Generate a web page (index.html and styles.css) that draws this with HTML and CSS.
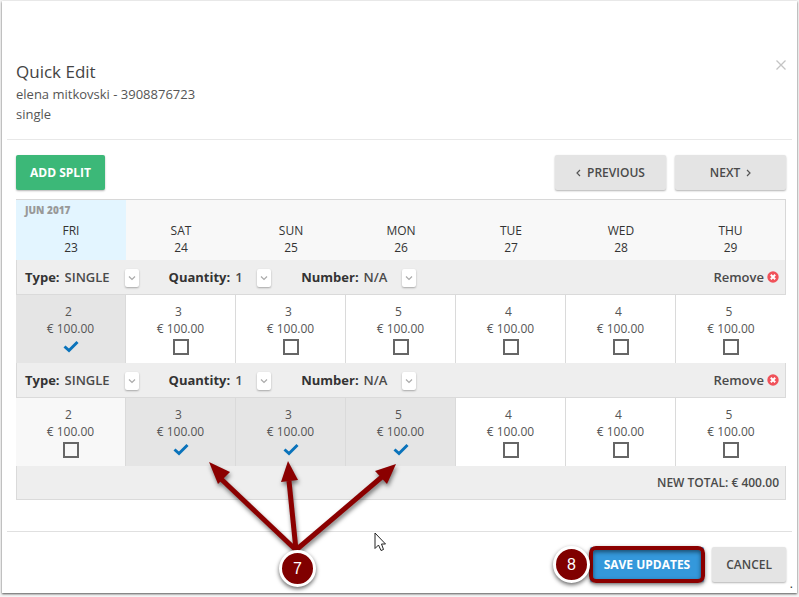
FILE: index.html
```html
<!DOCTYPE html>
<html lang="en">
<head>
  <meta charset="UTF-8">
  <meta name="viewport" content="width=device-width, initial-scale=1.0">
  <title>Quick Edit</title>
  <link rel="stylesheet" href="styles.css">
</head>
<body>
  <div class="dialog">
    <header class="dialog-header">
      <div>
        <h1 class="title">Quick Edit</h1>
        <p class="guest">elena mitkovski - 3908876723</p>
        <p class="guest">single</p>
      </div>
      <button type="button" class="close" aria-label="Close">
        <svg width="10" height="10" viewBox="0 0 10 10"><path d="M0.5 0.5L9.5 9.5M9.5 0.5L0.5 9.5" stroke="#c4c4c4" stroke-width="1.3"/></svg>
      </button>
    </header>

    <main class="dialog-body">
      <div class="toolbar">
        <button type="button" class="btn btn-green">ADD SPLIT</button>
        <div class="pager">
          <button type="button" class="btn btn-wide">
            <svg width="5" height="8" viewBox="0 0 5 8"><path d="M4 1L1 4L4 7" fill="none" stroke="#555" stroke-width="1.2"/></svg>
            PREVIOUS
          </button>
          <button type="button" class="btn btn-wide">
            NEXT
            <svg width="5" height="8" viewBox="0 0 5 8"><path d="M1 1L4 4L1 7" fill="none" stroke="#555" stroke-width="1.2"/></svg>
          </button>
        </div>
      </div>

      <table class="rates">
        <thead>
          <tr>
            <th class="today"><span class="month">JUN 2017</span>FRI<br>23</th>
            <th>SAT<br>24</th>
            <th>SUN<br>25</th>
            <th>MON<br>26</th>
            <th>TUE<br>27</th>
            <th>WED<br>28</th>
            <th>THU<br>29</th>
          </tr>
        </thead>
        <tbody id="splits"></tbody>
        <tfoot>
          <tr>
            <td colspan="7" class="total">NEW TOTAL: € 400.00</td>
          </tr>
        </tfoot>
      </table>
    </main>

    <footer class="dialog-footer">
      <button type="button" class="btn btn-blue marked">SAVE UPDATES</button>
      <button type="button" class="btn">CANCEL</button>
    </footer>

    <!-- step markers -->
    <svg class="arrows" width="220" height="110" viewBox="0 0 220 110">
      <g stroke="#8b0000" stroke-width="5">
        <path d="M97 91L20 18"/>
        <path d="M97 91L90 22"/>
        <path d="M97 91L184 17"/>
      </g>
      <g fill="#8b0000">
        <circle cx="97" cy="91" r="3"/>
        <path d="M10 3L31 13L19 25Z"/>
        <path d="M89 2L99 21L82 23Z"/>
        <path d="M197 5L188 25L176 12Z"/>
      </g>
    </svg>
    <span class="badge badge-seven">7</span>
    <span class="badge badge-eight">8</span>
    <svg class="cursor" width="13" height="20" viewBox="0 0 13 20"><path d="M1 1V16.5L4.5 13L7 18.500L9.500 17.500L7.500 12H11.500Z" fill="#fff" stroke="#222" stroke-width="1"/></svg>
    <span class="dot">.</span>
  </div>

  <script>
    const counts = [2, 3, 3, 5, 4, 4, 5];
    // index of the checked days in each split
    const splits = [[0], [1, 2, 3]];

    function picker(id, label, value) {
      return `<label for="${id}">${label}:</label>
        <span class="picker">
          <select id="${id}"><option>${value}</option></select>
          <span class="picker-arrow"><svg width="8" height="5" viewBox="0 0 8 5"><path d="M1 0.500L4 3.500L7 0.500" fill="none" stroke="#aaa" stroke-width="1.2"/></svg></span>
        </span>`;
    }

    let rows = '';
    splits.forEach((checked, s) => {
      rows += `<tr><td colspan="7" class="split">
        <div class="split-bar">
          ${picker('type' + s, 'Type', 'SINGLE')}
          ${picker('quantity' + s, 'Quantity', '1')}
          ${picker('number' + s, 'Number', 'N/A')}
          <button type="button" class="remove">Remove
            <svg width="12" height="12" viewBox="0 0 12 12"><circle cx="6" cy="6" r="5.7" fill="#f0525a"/><path d="M3.800 3.800L8.200 8.200M8.200 3.800L3.800 8.200" stroke="#fff" stroke-width="2"/></svg>
          </button>
        </div>
      </td></tr><tr>`;
      counts.forEach((count, i) => {
        const on = checked.includes(i);
        rows += `<td class="day ${on ? 'selected' : ''}">
          <label><span class="count">${count}</span>€ 100.00
            <span class="tick">
              <input type="checkbox" ${on ? 'checked' : ''}>
              <svg width="16" height="16" viewBox="0 0 16 16"><path d="M1.500 7.500L6 11.500L14.500 3" fill="none" stroke="#0a73bb" stroke-width="3"/></svg>
            </span>
          </label>
        </td>`;
      });
      rows += '</tr>';
    });
    document.getElementById('splits').innerHTML = rows;
  </script>
</body>
</html>
```
FILE: styles.css
```css
* {
  box-sizing: border-box;
}
body {
  margin: 0;
  padding: 1px 2px 3px;
  background: #f4f4f4;
  font-family: "Open Sans", sans-serif;
  font-size: 12px;
  color: #333;
}
.dialog {
  position: relative;
  padding: 59px 5px 8px;
  background: #fff;
  box-shadow: 0 1px 2px #555;
}
.dialog-header {
  display: flex;
  justify-content: space-between;
  align-items: flex-start;
  padding: 0 6px 15px 9px;
  border-bottom: 1px solid #e8e8e8;
}
.title {
  margin: 0 0 1px;
  font-size: 17px;
  font-weight: 400;
  line-height: 23px;
  color: #444;
}
.guest {
  margin: 0;
  font-size: 13px;
  line-height: 20px;
  color: #555;
}
.close {
  display: flex;
  padding: 0;
  border: none;
  background: none;
}
.dialog-body {
  padding: 15px 6px 31px 9px;
}
.toolbar,
.pager {
  display: flex;
  justify-content: space-between;
  gap: 9px;
}
.toolbar {
  margin-bottom: 9px;
}
.btn {
  display: flex;
  justify-content: center;
  align-items: center;
  gap: 6px;
  height: 35px;
  padding: 0 14px;
  border: none;
  border-radius: 2px;
  background: #e4e4e4;
  box-shadow: 0 1px 2px rgba(0, 0, 0, 0.3);
  font-family: inherit;
  font-size: 12px;
  font-weight: 600;
  color: #4a4a4a;
}
.btn-wide {
  width: 111px;
}
.btn-green {
  background: #3cb878;
  font-weight: 700;
  color: #fff;
}
.btn-blue {
  background: #3498db;
  font-weight: 700;
  color: #fff;
}

/* table */
.rates {
  width: 100%;
  table-layout: fixed;
  border-collapse: separate;
  border-spacing: 0;
  line-height: 17px;
  text-align: center;
}
.rates th,
.rates td {
  padding: 0;
}
.rates th {
  height: 61px;
  padding-bottom: 4px;
  border-top: 1px solid #d8d8d8;
  background: #f8f8f8;
  font-weight: 500;
  vertical-align: bottom;
}
.rates th:last-child {
  border-right: 1px solid #d8d8d8;
}
.rates th.today {
  background: #e3f5ff;
}
.month {
  display: block;
  padding-left: 9px;
  margin-bottom: 3px;
  font-size: 10px;
  font-weight: 800;
  text-align: left;
  color: #999;
}
.split,
.total {
  border: 1px solid #dadada;
  border-top: none;
  background: #eee;
}
.split-bar {
  display: flex;
  align-items: center;
  height: 34px;
  padding: 0 6px 0 8px;
  font-size: 13px;
}
.split-bar label {
  margin-right: 5px;
  font-weight: 700;
}
.picker {
  display: inline-grid;
  align-items: center;
  margin-right: 30px;
}
.picker select,
.picker-arrow {
  grid-area: 1 / 1;
}
.picker select {
  appearance: none;
  padding: 0 28px 0 0;
  border: none;
  background: none;
  font: inherit;
  font-weight: 600;
  color: #4a4a4a;
}
.picker-arrow {
  display: flex;
  justify-content: center;
  align-items: center;
  justify-self: end;
  width: 14px;
  height: 18px;
  margin-top: 2px;
  border-radius: 2px;
  background: #fff;
  box-shadow: 0 1px 2px rgba(0, 0, 0, 0.3);
  pointer-events: none;
}
.remove {
  display: flex;
  align-items: center;
  gap: 3px;
  margin-left: auto;
  padding: 0;
  border: none;
  background: none;
  font: inherit;
  font-weight: 600;
  color: #4a4a4a;
}
.day {
  height: 68px;
  border-right: 1px solid #dadada;
  color: #555;
}
.day:first-child {
  background: #f8f8f8;
}
.day:last-child {
  border-right: none;
}
.rates .day.selected {
  background: #e5e5e5;
}
.count {
  display: block;
  padding-right: 4px;
}
.tick {
  display: grid;
  justify-content: center;
  margin-top: 2px;
}
.tick input,
.tick svg {
  grid-area: 1 / 1;
}
.tick input {
  appearance: none;
  width: 16px;
  height: 16px;
  margin: 0;
  border: 2px solid #666;
}
.tick input:checked {
  border: none;
}
.tick svg {
  visibility: hidden;
}
.tick input:checked + svg {
  visibility: visible;
}
.total {
  height: 34px;
  text-align: right;
  font-weight: 600;
  color: #4a4a4a;
}
.rates .total {
  padding-right: 6px;
}

.dialog-footer {
  display: flex;
  justify-content: flex-end;
  gap: 8px;
  padding: 15px 6px 3px;
  border-top: 1px solid #e0e0e0;
}

/* step markers */
.marked {
  position: relative;
}
.marked::after {
  content: "";
  position: absolute;
  inset: -1px;
  border: 4px solid #8b0000;
  border-radius: 7px;
  box-shadow: 0 2px 4px rgba(0, 0, 0, 0.5), inset 0 2px 4px rgba(0, 0, 0, 0.5);
}
.arrows {
  position: absolute;
  left: 197px;
  top: 458px;
  filter: drop-shadow(1px 3px 2px rgba(0, 0, 0, 0.5));
}
.badge {
  position: absolute;
  display: flex;
  justify-content: center;
  align-items: center;
  width: 37px;
  height: 37px;
  border: 3px solid #fff;
  border-radius: 50%;
  background: #800000;
  box-shadow: 0 2px 4px rgba(0, 0, 0, 0.6);
  font-family: "Liberation Sans", sans-serif;
  font-size: 16px;
  color: #fff;
}
.badge-seven {
  left: 277px;
  top: 549px;
}
.badge-eight {
  right: 207px;
  bottom: 10px;
}
.cursor {
  position: absolute;
  left: 372px;
  top: 531px;
}
.dot {
  position: absolute;
  right: 4px;
  bottom: 1px;
}
```
